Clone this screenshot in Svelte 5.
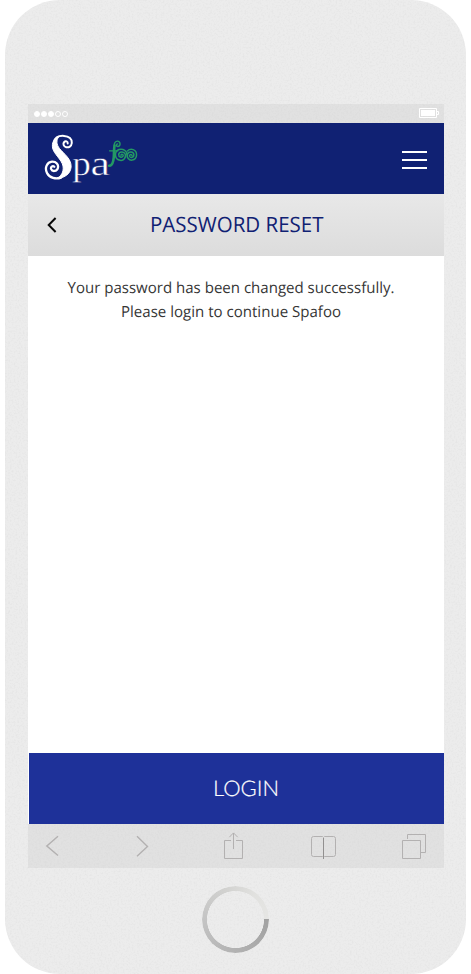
<script>
  const signal = [true, true, true, false, false];
</script>

<div class="phone">
  <svg class="grain" width="461" height="974" aria-hidden="true">
    <filter id="grain" x="0" y="0" width="100%" height="100%">
      <feTurbulence type="fractalNoise" baseFrequency="0.55" numOctaves="2" seed="4" />
      <feColorMatrix values="0 0 0 0 0.5  0 0 0 0 0.5  0 0 0 0 0.5  0.34 0 0 0 -0.15" />
    </filter>
    <rect width="461" height="974" filter="url(#grain)" />
  </svg>

  <div class="device">
    <div class="status">
      <div class="signal">
        {#each signal as on}
          <i class:on></i>
        {/each}
      </div>
      <svg class="battery" width="20" height="10" viewBox="0 0 20 10" fill="none" stroke="#fff">
        <path d="M.5.5h17v9H.5zM18 3.5h1.5v3H18" />
        <path d="M2 2h14v6H2z" fill="#fff" stroke="none" />
      </svg>
    </div>

    <header>
      <svg class="logo" width="96" height="57" viewBox="0 -3 96 57" aria-label="Spafoo">
        <g fill="none" stroke="#fff" stroke-linecap="round" stroke-linejoin="round">
          <path stroke-width="2" d="M10 9C11 4 15 2.6 20 2.9C25 3.1 28.2 6 27.8 10C27.4 13.4 24.8 14.8 22.2 14.2C19.5 13.5 18.7 10.7 20.2 9C21.5 7.5 24 8.4 23.7 10.4" />
          <path fill="#fff" stroke-width="1" d="M14.5 4C9.5 6 7.7 10 8.6 15C9.8 21 17.7 26.5 19 33C20 39 17 43.5 12.5 45.4C19.5 45.3 26.5 41.5 27.1 34C27.6 26 20 21 15.5 15.5C12.3 11.5 12.2 7 14.5 4z" />
          <path stroke-width="2.3" d="M17 44.6C12 46.6 5.5 45 3 40C.4 35 2.9 29 8 28.7C12.2 28.5 14.8 31.6 13.9 35C13 38.5 8.3 39 7.2 36.2C6.4 34 8.6 32.3 10.2 33.7" />
        </g>
        <g class="letters" fill="#fff" stroke="#102173" stroke-width=".45">
          <text x="28.3" y="42" font-size="35" textLength="18.5" lengthAdjust="spacingAndGlyphs">p</text>
          <text x="46.6" y="42" font-size="35" textLength="19.5" lengthAdjust="spacingAndGlyphs">a</text>
        </g>
        <g fill="none" stroke="#239963" stroke-linecap="round">
          <path stroke-width="1.4" d="M70.2 13.5C69.8 10 71.6 7.9 73.8 8.1C76.8 8.8 76.8 13.5 73.8 13.5C72 13.2 72.2 11 73.6 10.9" />
          <path stroke-width="2.6" d="M70.6 12.5C69.4 17 70.6 22 69.3 27.5C68.5 31 67 32.8 65.2 32.8" />
          <path stroke-width="1.2" d="M65.5 17.8H74" />
          <path stroke-width="1.5" d="M77 22.3C77.2 20.5 79.9 21.4 79 23.2C78 25.1 74.5 24.2 74.7 21.6C74.9 18.5 79.8 17.8 81.2 21C82.5 24.5 79.5 28 76.1 27.3C70.5 26.4 69.8 18.6 75 16.5C79.2 15.1 83.4 18.5 83 22" />
          <path stroke-width="1.5" d="M88 22.5C87.5 20.7 84.9 21.7 85.7 23.5C86.7 25.3 90.2 24.2 89.9 21.6C89.5 18.5 84.9 18.1 83.5 21.1C82.3 24.5 85 27.6 88.2 27.1C93.8 26.2 93.8 18.3 89.2 16.6C87 16 84.8 16.6 83.4 18" />
        </g>
      </svg>
      <button class="menu" aria-label="Menu"><i></i><i></i><i></i></button>
    </header>

    <div class="title">
      <button aria-label="Back">
        <svg width="10" height="16" viewBox="0 0 10 16" fill="none" stroke="#080808" stroke-width="2"><path d="M8.6 1 1.7 8l6.9 7" /></svg>
      </button>
      <svg class="heading" width="182" height="34" role="heading" aria-level="1">
        <text x="5" y="23.7" textLength="173.5" lengthAdjust="spacingAndGlyphs">PASSWORD RESET</text>
      </svg>
    </div>

    <main>
      <svg width="416" height="60">
        <text x="203" y="22" text-anchor="middle" textLength="327" lengthAdjust="spacingAndGlyphs">Your password has been changed successfully.</text>
        <text x="203" y="46" text-anchor="middle" textLength="220" lengthAdjust="spacingAndGlyphs">Please login to continue Spafoo</text>
      </svg>
    </main>

    <button class="login">
      <svg width="70" height="34"><text x="0" y="24" textLength="66" lengthAdjust="spacingAndGlyphs">LOGIN</text></svg>
    </button>

    <nav>
      <svg class="back" width="13" height="22" viewBox="0 0 13 22"><path stroke-width="1.4" d="M12 1.2.9 11 12 20.5" /></svg>
      <svg class="forward" width="13" height="22" viewBox="0 0 13 22"><path stroke-width="1.4" d="m1 1.2 10.5 10.3L1 21.2" /></svg>
      <svg class="share" width="19" height="27" viewBox="0 0 19 27"><path d="M7 8.5H.5v18h18v-18H12M9.5 17V1M5.3 5.2l4.2-4.3 4.2 4.3" /></svg>
      <svg class="book" width="25" height="24" viewBox="0 0 25 24"><path d="M12.5 1.5 11.5.5h-9a2 2 0 0 0-2 2v16a2 2 0 0 0 2 2h9l1 1 1-1h9a2 2 0 0 0 2-2v-16a2 2 0 0 0-2-2h-9z" /><path stroke="#929090" d="M12.5 2v21" /></svg>
      <svg class="tabs" width="24" height="25" viewBox="0 0 24 25"><path d="M.5 6.5h18v18H.5zM5.5 5V.5h18v18H19" /></svg>
    </nav>
  </div>

  <div class="home"></div>
</div>

<style>
  :global(body) {
    margin: 0;
    background: #fff;
  }
  .phone {
    position: relative;
    box-sizing: border-box;
    width: 461px;
    height: 974px;
    margin-left: 5px;
    padding: 104px 22px 0 23px;
    border-radius: 55px;
    background: #ececec;
    overflow: hidden;
    font-family: "Open Sans", sans-serif;
    text-rendering: geometricPrecision;
  }
  .grain {
    position: absolute;
    inset: 0;
  }
  svg {
    display: block;
    flex: none;
  }
  button {
    border: 0;
    padding: 0;
    background: none;
    text-rendering: inherit;
  }
  .device {
    position: relative;
    width: 416px;
    height: 764px;
    display: flex;
    flex-direction: column;
  }
  .status {
    height: 19px;
    box-sizing: border-box;
    padding: 0 5px 0 6px;
    display: flex;
    align-items: center;
    justify-content: space-between;
    background: rgba(205, 205, 205, 0.36);
  }
  .battery {
    margin-bottom: 1px;
  }
  .signal {
    display: flex;
    gap: 1px;
  }
  .signal i {
    box-sizing: border-box;
    width: 6px;
    height: 6px;
    border: 1.2px solid #fff;
    border-radius: 50%;
  }
  .signal .on {
    background: #fff;
  }
  header {
    height: 71px;
    box-sizing: border-box;
    padding: 0 17px 0 16px;
    display: flex;
    align-items: center;
    justify-content: space-between;
    background: #102173;
  }
  .letters {
    font-family: "Liberation Serif", serif;
  }
  .menu {
    width: 25px;
    padding-top: 3px;
    display: grid;
    gap: 6px;
  }
  .menu i {
    height: 2px;
    background: #fff;
  }
  .title {
    height: 62px;
    display: flex;
    align-items: center;
    background: linear-gradient(#e8e8e8, #dcdcdc);
  }
  .title button {
    width: 10px;
    margin-left: 19px;
  }
  .heading {
    margin-left: 88px;
    font-size: 21px;
    fill: #102173;
  }
  main {
    flex: 1;
    padding-top: 15px;
    background: #fff;
    font-size: 15.3px;
    fill: #363636;
  }
  .login {
    height: 71px;
    border-left: 1px solid #fff;
    display: flex;
    align-items: center;
    padding-left: 184px;
    background: #1e3199;
    background-clip: padding-box;
    font-family: Lato, sans-serif;
    font-size: 21.5px;
    font-weight: 300;
    fill: #fff;
    stroke: #fff;
    stroke-width: 0.2px;
  }
  nav {
    height: 44px;
    box-sizing: border-box;
    padding-left: 18px;
    display: flex;
    align-items: flex-start;
    background: rgba(205, 205, 205, 0.36);
    fill: none;
    stroke: #b3b1b1;
  }
  .back {
    margin-top: 11px;
  }
  .forward {
    margin: 11px 0 0 77px;
  }
  .share {
    margin: 8px 0 0 75px;
  }
  .book {
    margin: 12px 0 0 68px;
  }
  .tabs {
    margin: 10px 0 0 66px;
  }
  .home {
    position: relative;
    width: 67px;
    height: 67px;
    margin: 18px 0 0 174px;
    border-radius: 50%;
    background: conic-gradient(from 90deg, #a1a1a1, #b2b2b2 25%, #c4c4c4 50%, #d2d2d0 70%, #e1e1df 85%, #e6e6e4);
    mask: radial-gradient(circle, transparent 28.2px, #000 28.8px);
  }
</style>
